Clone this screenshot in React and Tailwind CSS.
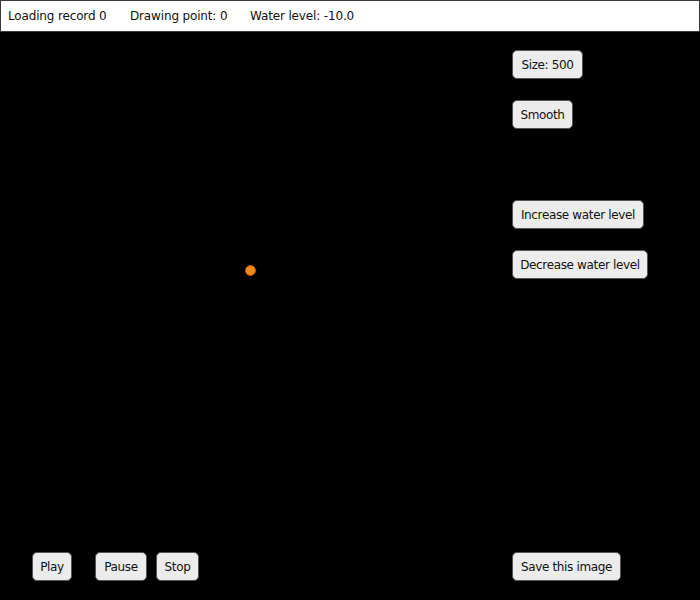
import React from "react";

function Btn({ children, className = "" }) {
  return (
    <button
      className={
        "flex h-[29px] items-center justify-center rounded-[5px] border border-[#555555] bg-[#ececec] pt-[1px] text-[12px] leading-none tracking-[-0.35px] text-[#111] " +
        className
      }
      style={{ fontFamily: '"DejaVu Sans", sans-serif' }}
    >
      {children}
    </button>
  );
}

export default function App() {
  return (
    <div
      className="flex h-[600px] w-[700px] flex-col bg-black"
      style={{ fontFamily: '"DejaVu Sans", sans-serif' }}
    >
      <div className="flex h-[32px] items-center border border-[#3a3a3a] bg-white pl-[7px] text-[12px] tracking-[-0.15px] text-[#111]">
        <span className="w-[122px]">Loading record 0</span>
        <span className="w-[120px]">Drawing point: 0</span>
        <span>Water level: -10.0</span>
      </div>
      <div className="flex flex-1">
        <div className="relative flex w-[512px] flex-col justify-end pb-[19px] pl-[32px]">
          <div className="absolute left-[245px] top-[233px] h-[11px] w-[11px] rounded-full border border-[#b85500] bg-[#f28a1c]" />
          <div className="flex">
            <Btn className="w-[40px]">Play</Btn>
            <Btn className="ml-[23px] w-[52px]">Pause</Btn>
            <Btn className="ml-[9px] w-[43px]">Stop</Btn>
          </div>
        </div>
        <div className="flex flex-1 flex-col items-start pt-[18px] pb-[19px]">
          <Btn className="w-[71px]">Size: 500</Btn>
          <Btn className="mt-[21px] w-[61px]">Smooth</Btn>
          <Btn className="mt-[71px] w-[132px]">Increase water level</Btn>
          <Btn className="mt-[21px] w-[136px]">Decrease water level</Btn>
          <div className="flex-1" />
          <Btn className="w-[109px]">Save this image</Btn>
        </div>
      </div>
    </div>
  );
}
